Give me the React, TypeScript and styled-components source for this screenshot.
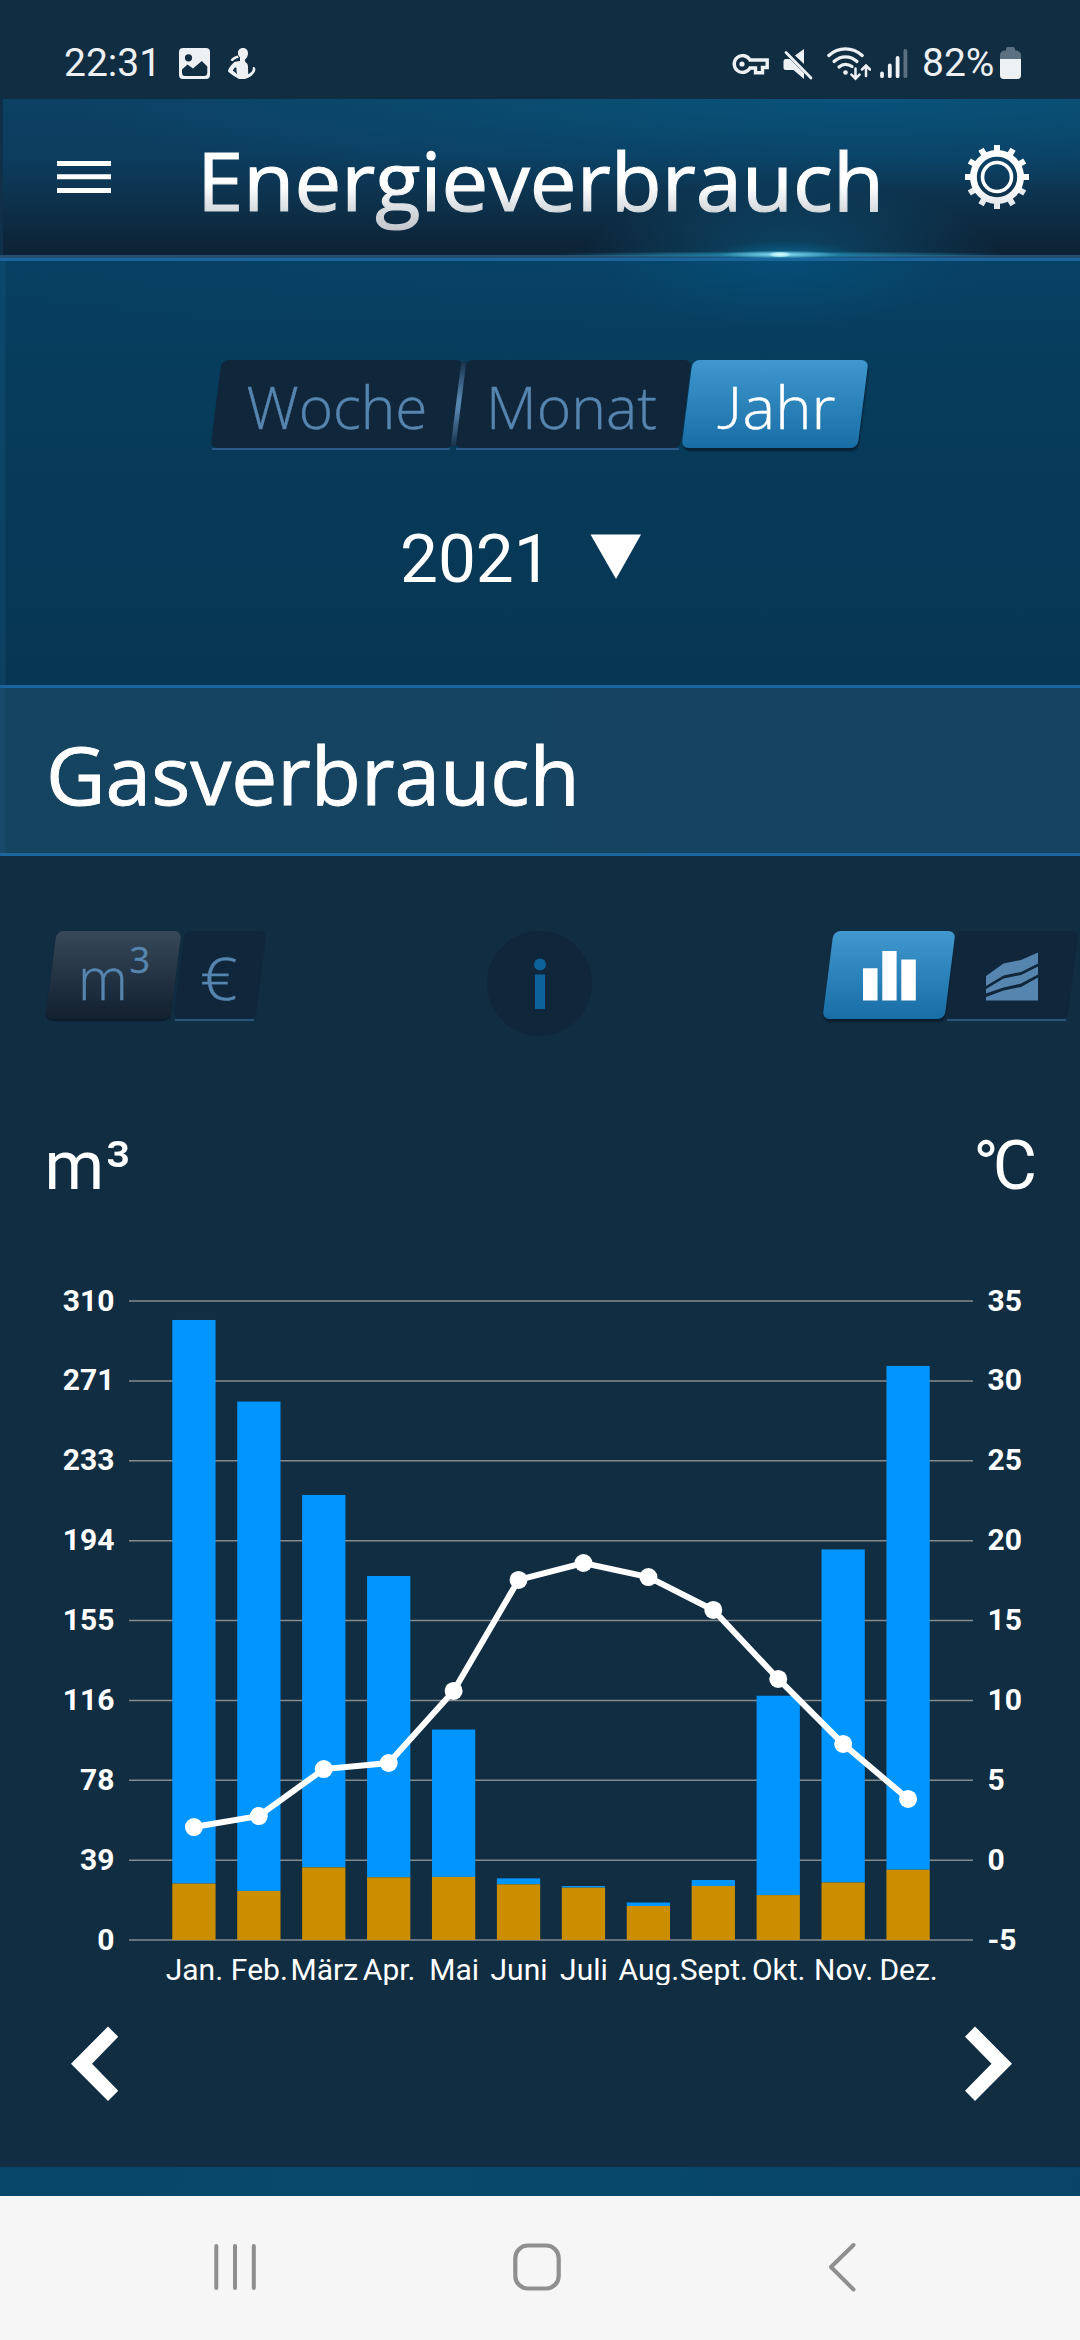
import React, { useLayoutEffect, useRef, useState } from "react";
import styled, { createGlobalStyle, css } from "styled-components";

const GlobalStyle = createGlobalStyle`
  * { box-sizing: border-box; }
  body { margin: 0; background: #112d42; }
`;

const humanist = `"Open Sans", "Noto Sans", sans-serif`;
const grotesk = `Roboto, "Liberation Sans", sans-serif`;

const Screen = styled.div`
  width: 1080px;
  height: 2340px;
  display: flex;
  flex-direction: column;
  overflow: hidden;
  background: #112d42;
  color: #fff;
  font-family: ${grotesk};
`;

/* Label condensed horizontally so that it fills a given width */
const FitBox = styled.span<{ $width: number }>`
  display: block;
  flex: none;
  width: ${(p) => p.$width}px;
  white-space: nowrap;
`;
const FitInner = styled.span`
  display: inline-block;
  transform-origin: 0 50%;
`;

function FitText({ width, children }: { width: number; children: React.ReactNode }) {
  const ref = useRef<HTMLSpanElement>(null);
  const [scale, setScale] = useState(1);
  useLayoutEffect(() => {
    if (ref.current) setScale(width / ref.current.offsetWidth);
  }, [width]);
  return (
    <FitBox $width={width}>
      <FitInner ref={ref} style={{ transform: `scaleX(${scale})` }}>
        {children}
      </FitInner>
    </FitBox>
  );
}

/* ---------- status bar ---------- */

const StatusBar = styled.div`
  flex: none;
  height: 99px;
  padding: 41px 59px 0 64px;
  display: flex;
  justify-content: space-between;
  color: #eef1f4;
`;
const StatusGroup = styled.div`
  display: flex;
  align-items: flex-start;
  height: 44px;
  svg { flex: none; display: block; margin-top: 5px; }
`;
const StatusText = styled.span<{ $width: number }>`
  width: ${(p) => p.$width}px;
  font-size: 39px;
  line-height: 45px;
  white-space: nowrap;
`;
const Gap = styled.i<{ $w: number }>`
  flex: none;
  width: ${(p) => p.$w}px;
`;

function StatusIcons() {
  const c = "#eef1f4";
  return (
    <StatusBar>
      <StatusGroup>
        <StatusText $width={115}>22:31</StatusText>
        <svg width="31" height="34" viewBox="0 0 31 34">
          <path
            fillRule="evenodd"
            fill={c}
            d="M4 2H27Q31 2 31 6V29Q31 33 27 33H4Q0 33 0 29V6Q0 2 4 2ZM9.5 8.2A3.6 3.6 0 1 0 9.5 15.4A3.6 3.6 0 1 0 9.5 8.2ZM3 23.5L8.5 18.5L14 22.5L22.8 15L28.3 20.5V26.5Q28.3 30 25 30H6Q3 30 3 26.5Z"
          />
        </svg>
        <Gap $w={18} />
        <svg width="28" height="34" viewBox="0 0 28 34">
          <g fill={c}>
            <path d="M15 2C18.5 2 20.2 4.5 20 7.5C20 10 18.5 12.5 17 13.5L17.2 16C19.5 17 20.2 19 20 22L20.2 28.2C23 27 25 24.5 24.8 22.5C24.5 21 25.5 20.8 26.3 21C28 22.5 27.5 25 26 27C23.5 30.5 19 33 15.5 33H11C7 31 3 28 0 25.5C0 23 4 17.5 7 15.8L12 15V11C10.5 10.5 10 9 10 7C9.8 4.2 12 2 15 2ZM7 21.2L4.8 24.4L9.2 28.2C8.5 26 8.2 23.5 8.6 22Z" fillRule="evenodd" />
            <path d="M2.5 14.2C4 12 6.5 10.2 9.5 9.6L11 12C8.5 11.8 6.5 13.2 4.6 15.2Z" />
          </g>
        </svg>
      </StatusGroup>
      <StatusGroup>
        <svg width="37" height="34" viewBox="0 0 37 34" fill="none" stroke={c} strokeWidth="3.4">
          <path d="M18 14A8.4 8.4 0 1 0 18 22H23.5V26.8H30.5V21.5H35.2V14Z" />
          <circle cx="10" cy="18" r="2.6" fill={c} stroke="none" />
        </svg>
        <Gap $w={14} />
        <svg width="30" height="35" viewBox="0 0 30 35">
          <path fill={c} d="M12 9.5L21 3V18Z M2.5 13H7L21 27V33L10.5 24H2.5Q0.5 24 .5 22V15.5Q.5 13 2.5 13Z" />
          <path d="M3 6.5L28 32" stroke={c} strokeWidth="2.8" strokeLinecap="round" />
        </svg>
        <Gap $w={14} />
        <svg width="44" height="35" viewBox="0 0 44 35" fill="none" stroke={c} strokeWidth="3.2" strokeLinecap="round">
          <path d="M1.8 9.5Q9 2.8 18.5 2.8T35.2 9.5" />
          <path d="M7 15.5Q12 10.8 18.5 10.8T30 15.5" />
          <path d="M12 21Q15 18.3 18.5 18.3T25 20.5" />
          <circle cx="18.5" cy="26.5" r="2.3" fill={c} stroke="none" />
          <path d="M28.5 22.5V32M24.5 28.7L28.5 32.7L32.5 28.7M39 30V20.5M35 23.5L39 19.5L43 23.5" strokeWidth="2.5" />
        </svg>
        <Gap $w={9} />
        <svg width="28" height="34" viewBox="0 0 28 34" stroke={c} strokeWidth="3.8" strokeLinecap="round">
          <path d="M2 27.5V30.2M9.8 19.5V30.2M17.6 12V30.2" />
          <path d="M25.4 5V30.2" stroke="#5b7182" />
        </svg>
        <Gap $w={14} />
        <StatusText $width={78}>82%</StatusText>
        <svg width="21" height="34" viewBox="0 0 21 34">
          <path fill="#5b7182" d="M6 3Q6 1 8 1H13Q15 1 15 3V4.5H17Q21 5.5 21 9V14H0V9Q0 5.5 4 4.5H6Z" />
          <path fill={c} d="M0 13H21V29Q21 33 17.5 33H3.5Q0 33 0 29Z" />
        </svg>
      </StatusGroup>
    </StatusBar>
  );
}

/* ---------- header ---------- */

const Header = styled.header`
  flex: none;
  height: 162px;
  border-bottom: 3px solid #1b659f;
  display: flex;
  align-items: flex-start;
  padding: 0 52px 0 57px;
  background:
    radial-gradient(ellipse 12px 3px at 780px 155.5px, #d9fbff 0%, rgba(190, 245, 255, 0.8) 60%, transparent 100%),
    radial-gradient(ellipse 60px 4px at 780px 155.5px, rgba(140, 225, 245, 0.95) 0%, transparent 100%),
    radial-gradient(ellipse 230px 3px at 780px 155.5px, rgba(40, 150, 185, 0.9) 0%, transparent 100%),
    radial-gradient(ellipse 75px 14px at 785px 156px, rgba(10, 125, 175, 0.5) 0%, transparent 100%),
    radial-gradient(ellipse 210px 85px at 790px 165px, rgba(10, 105, 150, 0.52) 0%, transparent 100%),
    linear-gradient(to right, #10304a 3px, transparent 3px) 0 0 / 100% 156px no-repeat,
    linear-gradient(#264e6e, #264e6e) 0 156px / 100% 3px no-repeat,
    radial-gradient(ellipse 800px 95px at 860px 0, rgba(5, 100, 145, 0.5) 0%, transparent 100%),
    linear-gradient(to bottom, #0c4163 0%, #0c3d5f 35%, #0d314b 65%, #0d2438 92%, #0d2438 100%);
`;
const HeaderIcon = styled.button<{ $top: number }>`
  flex: none;
  display: block;
  margin: ${(p) => p.$top}px 0 0;
  padding: 0;
  border: 0;
  background: none;
  svg { display: block; }
`;
const Title = styled.h1`
  flex: none;
  margin: 0 81px 0 86px;
  font: 500 81px/161px ${humanist};
  ${FitInner} {
    color: transparent;
    -webkit-text-stroke: 1.2px transparent;
    background: linear-gradient(to bottom, #fff 54%, #d4d9dd 70%, #c4c6cc 82%);
    -webkit-background-clip: text;
    background-clip: text;
  }
`;

function Gear() {
  const teeth = Array.from({ length: 12 }, (_, i) => i * 30);
  return (
    <svg width="64" height="64" viewBox="-32 -32 64 64">
      <defs>
        <linearGradient id="gear" gradientUnits="userSpaceOnUse" x1="0" y1="-32" x2="0" y2="32">
          <stop offset="0.6" stopColor="#fff" />
          <stop offset="1" stopColor="#dfe4e8" />
        </linearGradient>
      </defs>
      {teeth.map((a) => (
        <path key={a} d="M-3 -32H3V-25H-3Z" transform={`rotate(${a})`} fill={a > 90 && a < 270 ? "#e6eaed" : "#fff"} />
      ))}
      <circle r="23.6" fill="none" stroke="url(#gear)" strokeWidth="6.8" />
      <circle r="14.5" fill="none" stroke="#fff" strokeWidth="3.6" />
    </svg>
  );
}

/* ---------- skewed segmented buttons ---------- */

type Tone = "dark" | "blue" | "grey";

const tones = {
  dark: css`
    background: #10263a;
  `,
  blue: css`
    background: linear-gradient(#4098cf, #186da5);
    box-shadow: 1px 3px 2px rgba(8, 24, 38, 0.75);
  `,
  grey: css`
    background: linear-gradient(#364859, #122030);
    box-shadow: 0 2px 1px rgba(8, 20, 32, 0.7);
  `,
};

const Segments = styled.div<{ $gap: number }>`
  display: flex;
  gap: ${(p) => p.$gap}px;
  height: 88px;
`;
const Segment = styled.button<{ $width: number; $pad?: number; $tone: Tone; $underline?: string }>`
  position: relative;
  isolation: isolate;
  flex: none;
  display: flex;
  align-items: flex-start;
  width: ${(p) => p.$width}px;
  height: 88px;
  padding: 0 0 0 ${(p) => p.$pad ?? 0}px;
  border: 0;
  background: none;
  font: 300 58.5px/93px ${humanist};
  text-align: left;
  color: ${(p) => (p.$tone === "blue" ? "#fff" : "#5685b0")};
  -webkit-text-stroke: 0.4px currentColor;

  &::before {
    content: "";
    position: absolute;
    inset: 0;
    z-index: -1;
    border-radius: 7px;
    transform: skewX(-7.2deg);
    ${(p) => tones[p.$tone]}
  }
  &::after {
    content: "";
    position: absolute;
    z-index: -1;
    left: -4px;
    right: 7px;
    bottom: -2px;
    height: 2px;
    background: ${(p) => p.$underline ?? "transparent"};
  }
`;
const Divider = styled.i`
  flex: none;
  width: 5px;
  height: 86px;
  margin: 1px -2.5px 0 -2.5px;
  position: relative;
  z-index: 1;
  transform: skewX(-7.2deg);
  background: linear-gradient(#16324b, #5685b0 45%, #5685b0 55%, #16324b);
`;
const StraightJ = styled.span`
  font-family: Lato, ${humanist};
`;
const Sup = styled.span`
  margin-left: 2px;
  font-size: 36px;
  line-height: 58px;
  font-weight: 400;
`;

/* ---------- period ---------- */

const Period = styled.section`
  flex: none;
  height: 424px;
  padding-top: 99px;
  display: flex;
  flex-direction: column;
  align-items: flex-start;
  background:
    linear-gradient(to right, rgba(30, 105, 150, 0.2) 5px, transparent 6px),
    radial-gradient(ellipse 180px 65px at 780px 0, rgba(0, 95, 145, 0.38) 0%, transparent 100%),
    radial-gradient(ellipse 900px 100px at 700px 0, rgba(10, 75, 115, 0.25), transparent 100%),
    linear-gradient(#073f61, #073b5a 40%, #073654);
`;
const PeriodTabs = styled.div`
  margin-left: 215.5px;
`;
const YearPicker = styled.button`
  display: flex;
  align-items: flex-start;
  margin: 71px 0 0 400px;
  padding: 0;
  border: 0;
  background: none;
  color: #fff;
  font: 400 67.5px/80px ${grotesk};
  svg { display: block; margin-top: 15px; }
`;
const Year = styled.span`
  width: 190px;
  text-align: left;
`;

const SectionTitle = styled.h2`
  flex: none;
  height: 171px;
  margin: 0;
  padding-left: 46px;
  border: solid #1b659f;
  border-width: 3px 0;
  background: linear-gradient(to right, #1a4a6b 4px, #154461 6px, #154361);
  font: 400 80px/172px ${humanist};
  -webkit-text-stroke: 0.9px #fff;
`;

/* ---------- consumption panel ---------- */

const Panel = styled.section`
  flex: none;
  height: 1311px;
  padding-top: 75px;
  display: flex;
  flex-direction: column;
  background: #112d42;
`;
const Controls = styled.div`
  display: flex;
  height: 105px;
  padding-left: 51px;
`;
const InfoButton = styled.button`
  flex: none;
  width: 105px;
  height: 105px;
  margin: 0 235.5px 0 226.5px;
  padding: 0;
  border: 0;
  border-radius: 50%;
  background: #10263a;
  display: grid;
  place-items: center;
`;
const SegmentIcon = styled.svg`
  display: block;
  margin-top: 20px;
`;
const Units = styled.div`
  display: flex;
  justify-content: space-between;
  margin-top: 90px;
  padding: 0 49px 0 44.5px;
  font-size: 68px;
  line-height: 80px;
`;
const Celsius = styled.span`
  letter-spacing: -6px;
`;
const CubicMetre = styled.span`
  letter-spacing: 1.5px;
`;
const ChartFrame = styled.svg`
  display: block;
  flex: none;
  width: 1080px;
  height: 704px;
  margin-top: 75px;
  font-size: 30px;
`;
const Pager = styled.div`
  display: flex;
  justify-content: space-between;
  margin-top: 41px;
  padding: 0 68px 0 71px;
`;
const PagerButton = styled.button`
  padding: 0;
  border: 0;
  background: none;
  svg { display: block; }
`;

/* ---------- chart ---------- */

const months = [
  { name: "Jan.", total: 300.8, water: 27.4, temp: 2.07 },
  { name: "Feb.", total: 261.2, water: 23.8, temp: 2.76 },
  { name: "März", total: 215.9, water: 35.2, temp: 5.7 },
  { name: "Apr.", total: 176.6, water: 30.4, temp: 6.08 },
  { name: "Mai", total: 102.1, water: 30.6, temp: 10.59 },
  { name: "Juni", total: 29.9, water: 27, temp: 17.54 },
  { name: "Juli", total: 26.2, water: 25.4, temp: 18.6 },
  { name: "Aug.", total: 18.2, water: 16.5, temp: 17.72 },
  { name: "Sept.", total: 29.1, water: 26.2, temp: 15.66 },
  { name: "Okt.", total: 118.5, water: 21.8, temp: 11.34 },
  { name: "Nov.", total: 189.5, water: 27.9, temp: 7.27 },
  { name: "Dez.", total: 278.5, water: 34.1, temp: 3.83 },
];
const volumeTicks = [310, 271, 233, 194, 155, 116, 78, 39, 0];
const tempTicks = [35, 30, 25, 20, 15, 10, 5, 0, -5];

const plot = { left: 129, right: 973, top: 20, bottom: 659 };
const plotHeight = plot.bottom - plot.top;
const step = (plot.right - plot.left) / 13;
const barWidth = (step * 2) / 3;
const xAt = (i: number) => plot.left + step * (i + 1);
const yVolume = (v: number) => plot.bottom - (v / 310) * plotHeight;
const yTemp = (t: number) => plot.bottom - ((t + 5) / 40) * plotHeight;

function Chart() {
  return (
    <ChartFrame viewBox="0 0 1080 704">
      {volumeTicks.map((v, i) => {
        const y = plot.top + (plotHeight / 8) * i;
        return (
          <g key={v} fill="#fff" fontWeight="700">
            <path d={`M${plot.left} ${y}H${plot.right}`} stroke="#848b8e" strokeWidth="1.5" />
            <text x="114.5" y={y + 9.5} textAnchor="end">{v}</text>
            <text x="987.5" y={y + 9.5}>{tempTicks[i]}</text>
          </g>
        );
      })}
      {months.map((m, i) => (
        <g key={m.name}>
          <rect x={xAt(i) - barWidth / 2} y={yVolume(m.total)} width={barWidth} height={yVolume(m.water) - yVolume(m.total)} fill="#0095ff" />
          <rect x={xAt(i) - barWidth / 2} y={yVolume(m.water)} width={barWidth} height={plot.bottom - yVolume(m.water)} fill="#cb8e00" />
          <text x={xAt(i) + 0.5} y="699" textAnchor="middle" fill="#fff">{m.name}</text>
        </g>
      ))}
      <polyline
        points={months.map((m, i) => `${xAt(i)},${yTemp(m.temp)}`).join(" ")}
        fill="none"
        stroke="#fff"
        strokeWidth="6"
      />
      {months.map((m, i) => (
        <circle key={m.name} cx={xAt(i)} cy={yTemp(m.temp)} r="9" fill="#fff" />
      ))}
    </ChartFrame>
  );
}

/* ---------- bottom ---------- */

const Footer = styled.div`
  flex: none;
  height: 29px;
  background: linear-gradient(100deg, #084669, #09496c 30%, #08486b 60%, #084467);
`;
const NavBar = styled.nav`
  flex: 1;
  display: flex;
  padding: 47px 0 0 214px;
  background: #f6f6f6;
  svg { display: block; flex: none; }
`;
const HomeIcon = styled.svg`
  margin: 0 267px 0 256px;
`;

export default function App() {
  return (
    <Screen>
      <GlobalStyle />
      <StatusIcons />
      <Header>
        <HeaderIcon $top={62} aria-label="Menü">
          <svg width="54" height="33" viewBox="0 0 54 33" fill="#fff">
            <path d="M0 0H54V5H0ZM0 13.3H54V18.3H0ZM0 27H54V32H0Z" />
          </svg>
        </HeaderIcon>
        <Title>
          <FitText width={687}>Energieverbrauch</FitText>
        </Title>
        <HeaderIcon $top={46} aria-label="Einstellungen">
          <Gear />
        </HeaderIcon>
      </Header>

      <Period>
        <PeriodTabs>
          <Segments $gap={1.5}>
            <Segment $width={241.5} $pad={31} $tone="dark" $underline="#2a5a85">
              <FitText width={181}>Woche</FitText>
            </Segment>
            <Divider />
            <Segment $width={225.5} $pad={26} $tone="dark" $underline="#2a5a85">
              <FitText width={171}>Monat</FitText>
            </Segment>
            <Segment $width={175.5} $pad={30} $tone="blue">
              <FitText width={119}>
                <StraightJ>J</StraightJ>ahr
              </FitText>
            </Segment>
          </Segments>
        </PeriodTabs>
        <YearPicker>
          <Year>2021</Year>
          <svg width="52" height="46" viewBox="0 0 52 46">
            <path d="M0.5 0.5H51L26 45Z" fill="#fff" />
          </svg>
        </YearPicker>
      </Period>

      <SectionTitle>
        <FitText width={534}>Gasverbrauch</FitText>
      </SectionTitle>

      <Panel>
        <Controls>
          <Segments $gap={2.5}>
            <Segment $width={125} $pad={26.5} $tone="grey">
              <FitText width={50}>m</FitText>
              <Sup>3</Sup>
            </Segment>
            <Segment $width={82} $pad={21} $tone="dark" $underline="#2c5478">
              <FitText width={37}>€</FitText>
            </Segment>
          </Segments>
          <InfoButton aria-label="Info">
            <svg width="14" height="52" viewBox="0 0 14 52" fill="#0b6399">
              <circle cx="7" cy="6.5" r="6" />
              <path d="M2 16.5H12V51H2Z" />
            </svg>
          </InfoButton>
          <Segments $gap={1.5}>
            <Segment $width={122} $pad={35} $tone="blue">
              <SegmentIcon width="53" height="50" viewBox="0 0 53 50" fill="#fff">
                <path d="M0 17.3H14.5V49.5H0ZM19.3 0H33.6V49.5H19.3ZM38.3 8.5H52.8V49.5H38.3Z" />
              </SegmentIcon>
            </Segment>
            <Segment $width={121.5} $pad={35} $tone="dark" $underline="#2c5478">
              <SegmentIcon width="52" height="50" viewBox="0 0 52 50" fill="#5685b0">
                <path d="M0 25L17.5 12.5L35 9L52 1.5V12.5L35 21L17.5 24.5L0 35ZM0 38L17.5 27.5L35 24L52 15.5V23.5L35 32.5L17.5 36.5L0 42.5ZM0 46L17.5 39.5L35 36L52 26.5V49.5H0Z" />
              </SegmentIcon>
            </Segment>
          </Segments>
        </Controls>

        <Units>
          <CubicMetre>m³</CubicMetre>
          <Celsius>°C</Celsius>
        </Units>

        <Chart />

        <Pager>
          <PagerButton aria-label="Zurück">
            <svg width="47" height="76" viewBox="0 0 47 76" fill="#fff">
              <path d="M0 37.7L37 0.5L47.3 10.8L21 37.7L47.3 64.8L37 75Z" />
            </svg>
          </PagerButton>
          <PagerButton aria-label="Weiter">
            <svg width="47" height="76" viewBox="0 0 47 76" fill="#fff">
              <path d="M47 37.7L10 0.5L0 10.8L26.5 37.7L0 64.8L10 75Z" />
            </svg>
          </PagerButton>
        </Pager>
      </Panel>

      <Footer />
      <NavBar>
        <svg width="43" height="48" viewBox="0 0 43 48" stroke="#8f8f8f" strokeWidth="4" strokeLinecap="round">
          <path d="M2.3 3V45M21 3V45M39.8 3V45" />
        </svg>
        <HomeIcon width="48" height="48" viewBox="0 0 48 48" fill="none" stroke="#8f8f8f" strokeWidth="4.2">
          <rect x="2.3" y="2.5" width="43.4" height="43" rx="12.5" />
        </HomeIcon>
        <svg width="28" height="50" viewBox="0 0 28 50" fill="none" stroke="#8f8f8f" strokeWidth="4" strokeLinecap="round" strokeLinejoin="round">
          <path d="M25.5 2L3 24L25.5 46.5" />
        </svg>
      </NavBar>
    </Screen>
  );
}
